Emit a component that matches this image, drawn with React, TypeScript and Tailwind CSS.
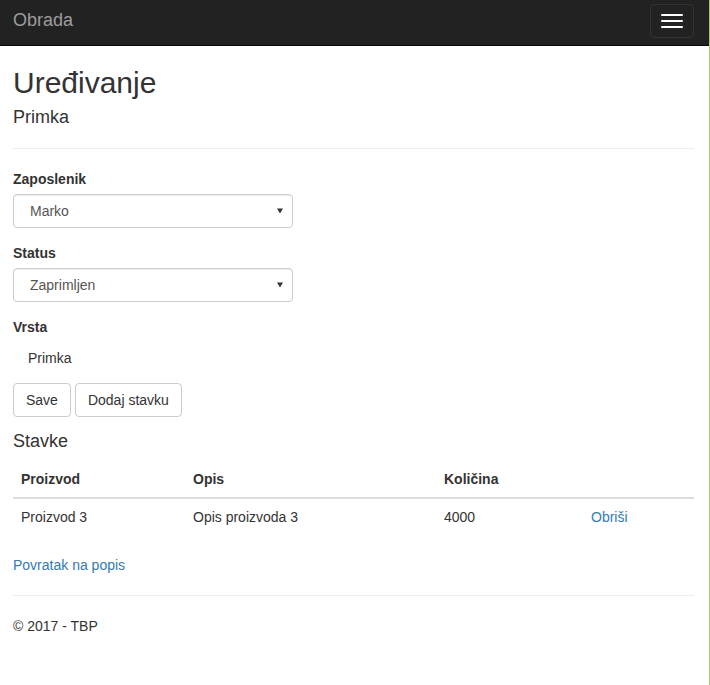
const font = { fontFamily: '"Liberation Sans", Arial, Helvetica, sans-serif' }

function Caret() {
  return (
    <svg width="6" height="6" viewBox="0 0 6 6" className="shrink-0">
      <path d="M0 0.5 H6 L3 5.5 Z" fill="#333" />
    </svg>
  )
}

function SelectBox({ value }: { value: string }) {
  return (
    <div className="flex h-[34px] w-[280px] items-center justify-between rounded-[4px] border border-[#ccc] bg-white pl-[16px] pr-[9px] text-[14px] leading-[20px] text-[#555] shadow-[inset_0_1px_1px_rgba(0,0,0,0.075)]">
      <span>{value}</span>
      <Caret />
    </div>
  )
}

function Label({ children }: { children: string }) {
  return <div className="mb-[5px] text-[14px] font-bold leading-[20px]">{children}</div>
}

function Button({ children }: { children: string }) {
  return (
    <button className="h-[34px] rounded-[4px] border border-[#ccc] bg-white px-[12px] text-[14px] leading-[20px] text-[#333]">
      {children}
    </button>
  )
}

export default function App() {
  return (
    <div
      style={font}
      className="min-h-[685px] w-[710px] border-r border-[#a4c968] bg-white text-[14px] leading-[20px] text-[#333]"
    >
      <nav className="flex h-[46px] items-start justify-between border-b border-[#080808] bg-[#222] pl-[13px] pr-[15px]">
        <div className="pt-[10px] text-[18px] leading-[21px] text-[#9d9d9d]">Obrada</div>
        <button className="mt-[4px] flex h-[34px] w-[44px] flex-col items-center justify-center gap-[4px] rounded-[4px] border border-[#333]">
          <span className="block h-[2px] w-[22px] rounded-[1px] bg-white" />
          <span className="block h-[2px] w-[22px] rounded-[1px] bg-white" />
          <span className="block h-[2px] w-[22px] rounded-[1px] bg-white" />
        </button>
      </nav>

      <main className="pl-[13px] pr-[15px]">
        <h2 className="mt-[20px] text-[30px] leading-[33px]">Uređivanje</h2>
        <h4 className="mt-[8px] text-[18px] leading-[20px]">Primka</h4>
        <hr className="mb-[20px] mt-[21px] border-t border-[#eee]" />

        <div className="mb-[15px]">
          <Label>Zaposlenik</Label>
          <SelectBox value="Marko" />
        </div>
        <div className="mb-[15px]">
          <Label>Status</Label>
          <SelectBox value="Zaprimljen" />
        </div>
        <div className="mb-[15px]">
          <Label>Vrsta</Label>
          <div className="pl-[15px] pt-[6px]">Primka</div>
        </div>

        <div className="flex gap-[4px]">
          <Button>Save</Button>
          <Button>Dodaj stavku</Button>
        </div>

        <h4 className="mb-[10px] mt-[14px] text-[18px] leading-[20px]">Stavke</h4>
        <table className="mb-[20px] w-full table-fixed border-collapse text-left">
          <thead>
            <tr className="border-b-2 border-[#ddd]">
              <th className="w-[172px] p-[8px] font-bold">Proizvod</th>
              <th className="w-[251px] p-[8px] font-bold">Opis</th>
              <th className="w-[147px] p-[8px] font-bold">Količina</th>
              <th className="p-[8px]" />
            </tr>
          </thead>
          <tbody>
            <tr>
              <td className="p-[8px]">Proizvod 3</td>
              <td className="p-[8px]">Opis proizvoda 3</td>
              <td className="p-[8px]">4000</td>
              <td className="p-[8px]">
                <a className="text-[#337ab7]">Obriši</a>
              </td>
            </tr>
          </tbody>
        </table>

        <div>
          <a className="text-[#337ab7]">Povratak na popis</a>
        </div>

        <hr className="mb-[20px] mt-[20px] border-t border-[#eee]" />
        <footer>
          <p>© 2017 - TBP</p>
        </footer>
      </main>
    </div>
  )
}
